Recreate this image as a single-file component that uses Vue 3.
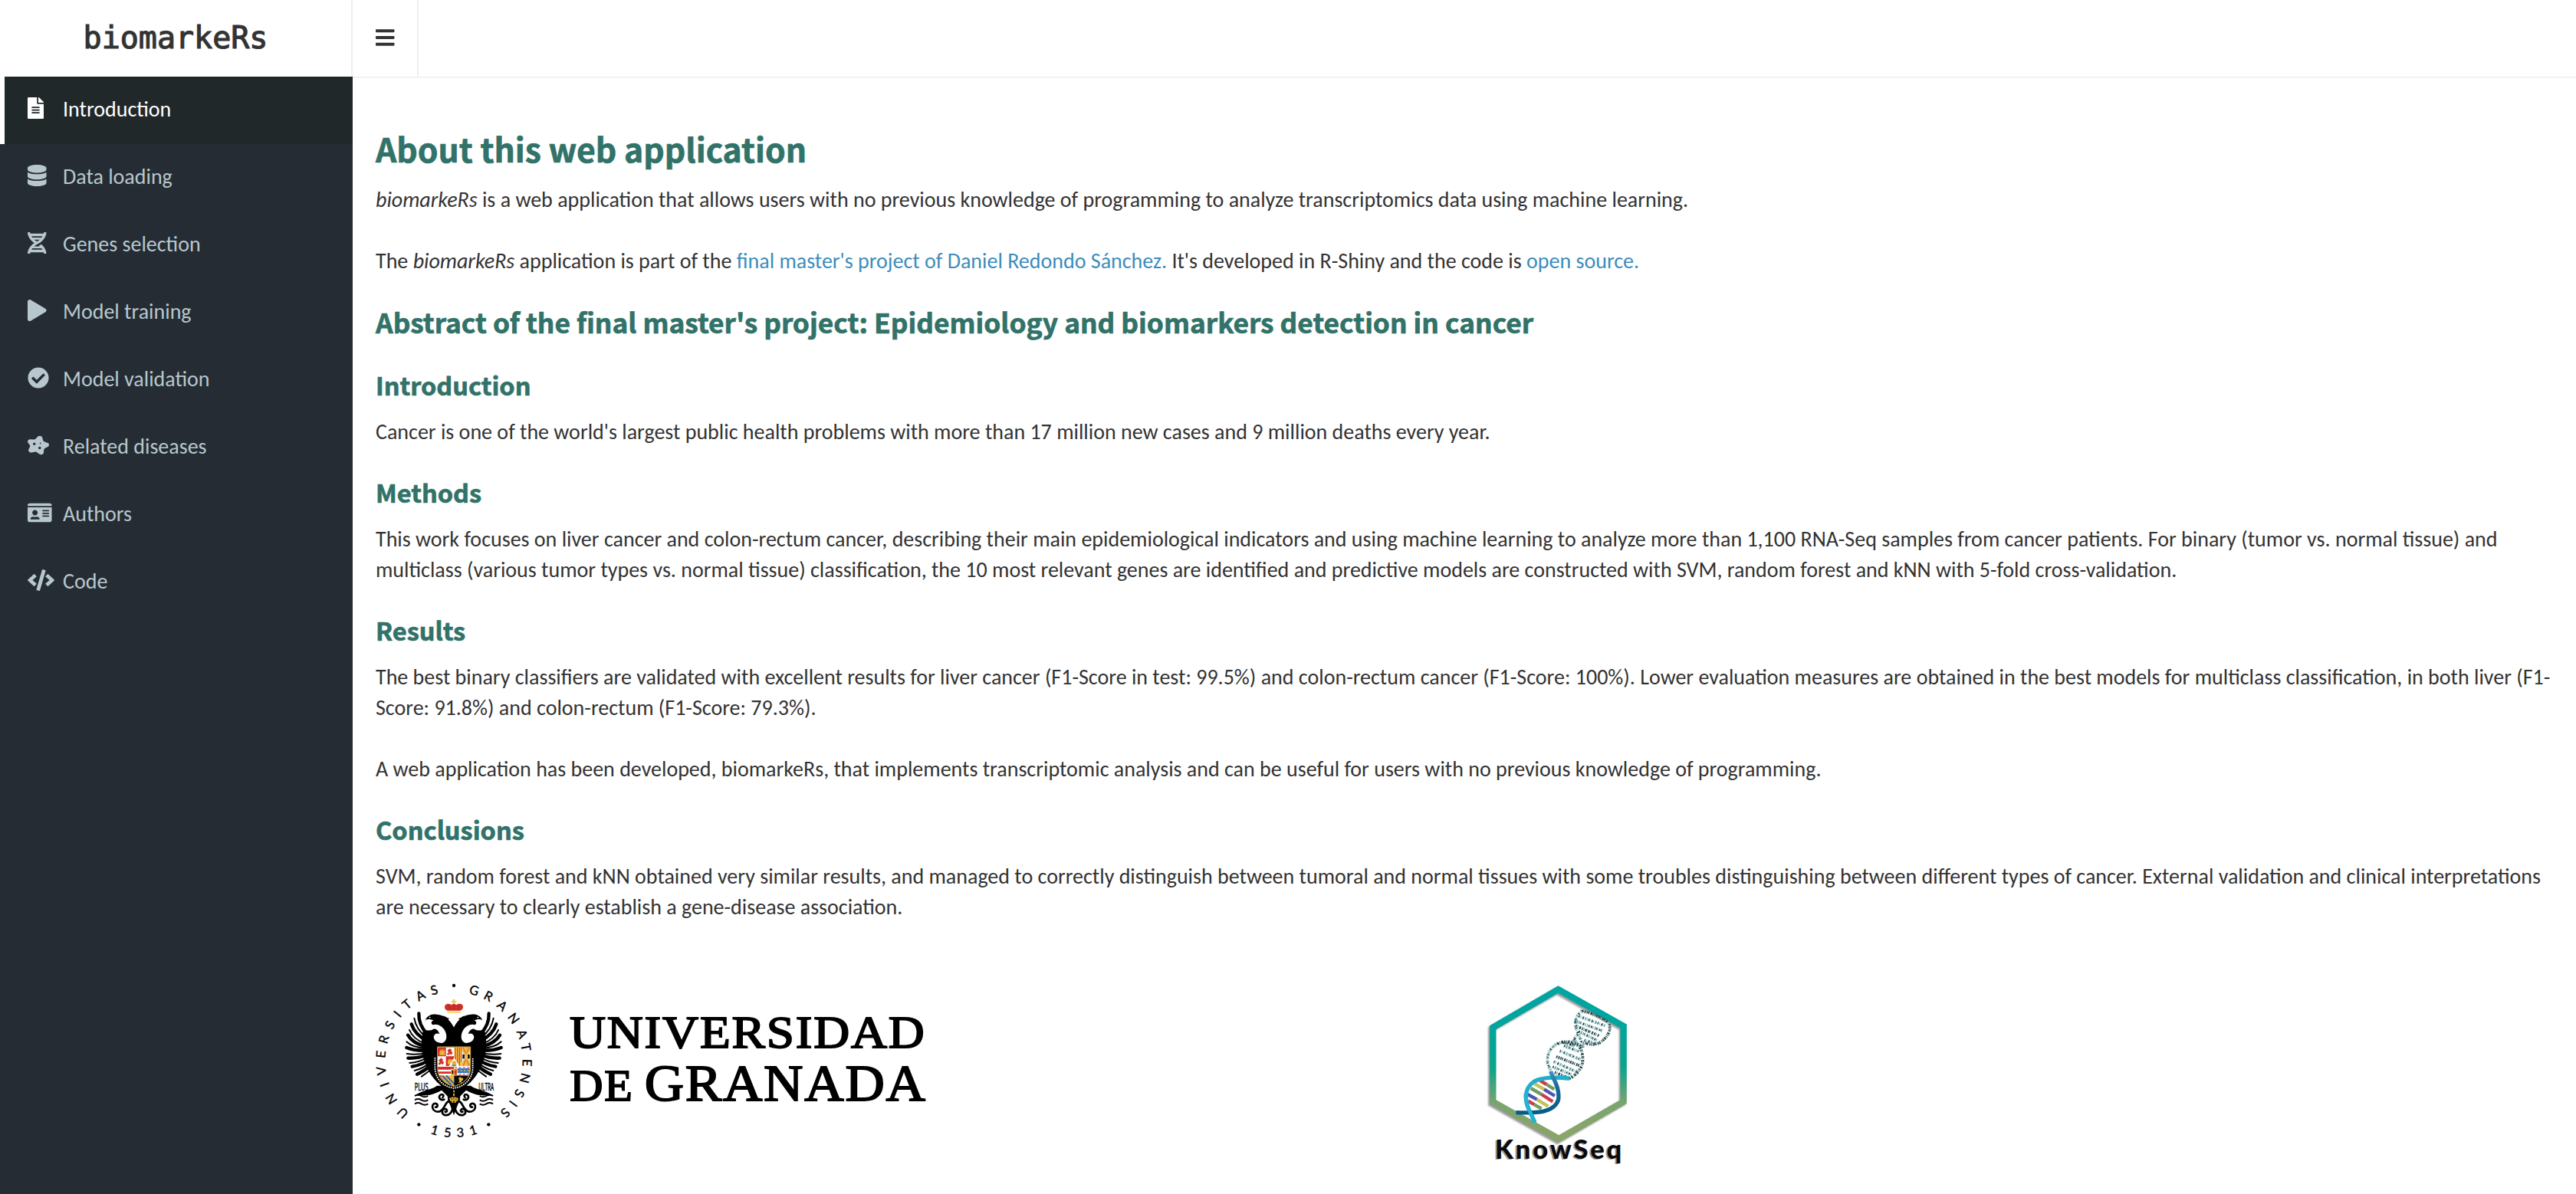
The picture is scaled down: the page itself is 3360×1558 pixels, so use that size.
<script setup>
const menu = [
  { label: 'Introduction', w: 384, active: true, d: 'M224 136V0H24C10.7 0 0 10.7 0 24v464c0 13.3 10.7 24 24 24h336c13.3 0 24-10.7 24-24V160H248c-13.2 0-24-10.8-24-24zm64 236c0 6.6-5.4 12-12 12H108c-6.6 0-12-5.4-12-12v-8c0-6.6 5.4-12 12-12h168c6.6 0 12 5.4 12 12v8zm0-64c0 6.6-5.4 12-12 12H108c-6.6 0-12-5.4-12-12v-8c0-6.6 5.4-12 12-12h168c6.6 0 12 5.4 12 12v8zm0-72v8c0 6.6-5.4 12-12 12H108c-6.6 0-12-5.4-12-12v-8c0-6.6 5.4-12 12-12h168c6.6 0 12 5.4 12 12zm96-114.1v6.1H256V0h6.1c6.4 0 12.5 2.5 17 7l97.9 98c4.5 4.5 7 10.6 7 16.9z' },
  { label: 'Data loading', w: 448, d: 'M448 73.143v45.714C448 159.143 347.667 192 224 192S0 159.143 0 118.857V73.143C0 32.857 100.333 0 224 0s224 32.857 224 73.143zM448 176v102.857C448 319.143 347.667 352 224 352S0 319.143 0 278.857V176c48.125 33.143 136.208 48.572 224 48.572S399.874 209.143 448 176zm0 160v102.857C448 479.143 347.667 512 224 512S0 479.143 0 438.857V336c48.125 33.143 136.208 48.572 224 48.572S399.874 369.143 448 336z' },
  { label: 'Genes selection', w: 448, d: 'M.1 494.1c-1.1 9.5 6.3 17.8 15.9 17.8l32.3.1c8.1 0 14.9-5.9 16-13.9.7-4.9 1.8-11.1 3.4-18.1H380c1.6 6.9 2.9 13.2 3.5 18.1 1.1 8 7.9 14 16 13.9l32.3-.1c9.6 0 17.1-8.3 15.9-17.8-4.6-37.9-25.6-129-118.9-207.7-17.6 12.4-37.1 24.2-58.5 35.4 6.2 4.6 11.4 9.4 17 14.2H159.7c21.3-18.1 47-35.6 78.7-51.4C410.5 199.1 442.1 65.8 447.9 17.9 449 8.4 441.6.1 432 .1L399.6 0c-8.1 0-14.9 5.9-16 13.9-.7 4.9-1.8 11.1-3.4 18.1H67.8c-1.6-7-2.7-13.1-3.4-18.1-1.1-8-7.9-14-16-13.9L16.1.1C6.5.1-1 8.4.1 17.9 5.3 60.8 31.4 171.8 160 256 31.5 340.2 5.3 451.2.1 494.1zM224 219.6c-25.1-13.7-46.4-28.4-64.3-43.6h128.5c-17.8 15.2-39.1 30-64.2 43.6zM355.1 96c-5.8 10.4-12.8 21.1-21 32H114c-8.3-10.9-15.3-21.6-21-32h262.1zM92.9 416c5.8-10.4 12.8-21.1 21-32h219.4c8.3 10.9 15.4 21.6 21.2 32H92.9z' },
  { label: 'Model training', w: 448, d: 'M424.4 214.7L72.4 6.6C43.8-10.3 0 6.1 0 47.9V464c0 37.5 40.7 60.1 72.4 41.3l352-208c31.4-18.5 31.5-64.1 0-82.6z' },
  { label: 'Model validation', w: 512, d: 'M504 256c0 136.967-111.033 248-248 248S8 392.967 8 256 119.033 8 256 8s248 111.033 248 248zM227.314 387.314l184-184c6.248-6.248 6.248-16.379 0-22.627l-22.627-22.627c-6.248-6.249-16.379-6.249-22.628 0L216 308.118l-70.059-70.059c-6.248-6.248-16.379-6.248-22.628 0l-22.627 22.627c-6.248 6.248-6.248 16.379 0 22.627l104 104c6.249 6.249 16.379 6.249 22.628.001z' },
  { label: 'Related diseases', w: 512, d: 'M472.29 195.9l-67.06-22.95c-19.28-6.6-33.54-20.92-38.14-38.31l-16-60.45c-11.58-43.77-76.57-57.13-110-22.62L195 99.24c-13.26 13.71-33.54 20.93-54.2 19.31l-71.9-5.62c-52-4.07-86.93 44.89-59 82.84l38.54 52.42c11.08 15.07 12.82 33.86 4.64 50.24l-28.43 57C4 396.67 47.46 440.29 98.11 429.23l70-15.28c20.11-4.39 41.45 0 57.07 11.73l54.32 40.83c39.32 29.56 101 7.57 104.45-37.22l4.7-61.86c1.35-17.79 12.8-33.86 30.63-43l62-31.74c44.84-22.96 39.55-80.17-8.99-96.79zM160 256a32 32 0 1 1 32-32 32 32 0 0 1-32 32zm128 96a32 32 0 1 1 32-32 32 32 0 0 1-32 32zm16-128a16 16 0 1 1 16-16 16 16 0 0 1-16 16z' },
  { label: 'Authors', w: 576, d: 'M528 32H48C21.5 32 0 53.5 0 80v16h576V80c0-26.5-21.5-48-48-48zM0 432c0 26.5 21.5 48 48 48h480c26.5 0 48-21.5 48-48V128H0v304zm352-232c0-4.4 3.6-8 8-8h144c4.4 0 8 3.6 8 8v16c0 4.4-3.6 8-8 8H360c-4.4 0-8-3.6-8-8v-16zm0 64c0-4.4 3.6-8 8-8h144c4.4 0 8 3.6 8 8v16c0 4.4-3.6 8-8 8H360c-4.4 0-8-3.6-8-8v-16zm0 64c0-4.4 3.6-8 8-8h144c4.4 0 8 3.6 8 8v16c0 4.4-3.6 8-8 8H360c-4.4 0-8-3.6-8-8v-16zM176 192c35.3 0 64 28.7 64 64s-28.7 64-64 64-64-28.7-64-64 28.7-64 64-64zM67.1 396.2C75.5 370.5 99.6 352 128 352h8.2c12.3 5.1 25.7 8 39.8 8s27.6-2.9 39.8-8h8.2c28.4 0 52.5 18.5 60.9 44.2 3.2 9.9-5.2 19.8-15.6 19.8H82.7c-10.4 0-18.8-10-15.6-19.8z' },
  { label: 'Code', w: 640, d: 'M278.9 511.5l-61-17.7c-6.4-1.8-10-8.5-8.2-14.9L346.2 8.7c1.8-6.4 8.5-10 14.9-8.2l61 17.7c6.4 1.8 10 8.5 8.2 14.9L293.8 503.3c-1.9 6.4-8.5 10.1-14.9 8.2zm-114-112.2l43.5-46.4c4.6-4.9 4.3-12.7-.8-17.2L117 256l90.6-79.7c5.1-4.5 5.5-12.3.8-17.2l-43.5-46.4c-4.5-4.8-12.1-5.1-17-.5L3.8 247.2c-5.1 4.7-5.1 12.8 0 17.5l144.1 135.1c4.9 4.6 12.5 4.4 17-.5zm327.2.6l144.1-135.1c5.1-4.7 5.1-12.8 0-17.5L492.1 112.1c-4.8-4.5-12.4-4.3-17 .5L431.6 159c-4.6 4.9-4.3 12.7.8 17.2L523 256l-90.6 79.7c-5.1 4.5-5.5 12.3-.8 17.2l43.5 46.4c4.5 4.9 12.1 5.1 17 .6z' },
]

// Seal lettering: character and its angle, in degrees clockwise from the top
const ring = [
  ['U', -135.6], ['N', -121.5], ['I', -109.1], ['V', -98], ['E', -85], ['R', -73.2], ['S', -60.9], ['I', -50.4], ['T', -39.8], ['A', -27.2], ['S', -15.6],
  ['G', 16.1], ['R', 28.2], ['A', 41.3], ['N', 54.8], ['A', 68.6], ['T', 79.4], ['E', 91.6], ['N', 103.9], ['S', 116.6], ['I', 125.9], ['S', 135.3],
]
const year = [['1', 15.4], ['5', 5], ['3', -5], ['1', -15.4]]

// Left wing, mirrored for the right one
const thick = [
  'M229 187 Q227 232 262 268', 'M200 229 Q212 268 262 296', 'M186 272 Q204 304 258 318',
  'M181 321 Q212 334 262 332', 'M187 362 Q222 364 268 348', 'M203 395 Q238 390 276 366', 'M222 425 Q252 412 284 384',
]
const thin = [
  'M211 206 Q218 250 258 280', 'M192 252 Q206 288 258 308', 'M181 298 Q206 322 258 324',
  'M182 345 Q218 350 262 342', 'M193 381 Q230 378 270 358', 'M212 411 Q246 402 280 376', 'M240 434 Q266 418 290 392',
]
const rungs = [
  [326, 420, 352, 435, '#cf3b4d'], [352, 435, 382, 454, '#6f9c63'],
  [304, 432, 342, 454, '#c4c25a'], [342, 454, 384, 480, '#4a55b8'],
  [290, 450, 332, 474, '#6f9c63'], [332, 474, 376, 502, '#cf3b4d'],
  [278, 474, 314, 494, '#4a55b8'], [314, 494, 358, 521, '#c4c25a'],
  [280, 500, 304, 514, '#cf3b4d'], [304, 514, 332, 530, '#6f9c63'],
]
const digits = [
  'M492 148 Q545 158 590 190', 'M478 168 L582 206', 'M462 186 L572 226', 'M466 206 L556 244', 'M478 228 L548 262',
  'M492 146 Q448 180 474 232 Q486 262 496 290', 'M598 200 Q606 240 560 272 Q530 286 495 270', 'M500 262 L548 276',
  'M460 258 Q466 274 496 290', 'M396 276 Q440 256 480 286 Q500 320 490 362 Q470 400 440 412', 'M396 274 Q350 300 356 352 L368 382',
  'M404 304 L486 338', 'M390 326 L482 362', 'M380 346 L470 386', 'M376 366 L452 398', 'M384 388 L438 410', 'M420 284 L478 306',
  'M474 240 Q452 262 456 286', 'M410 268 L462 284',
]
</script>

<template>
  <div class="app">
    <header class="topbar">
      <div class="brand">biomarkeRs</div>
      <button class="toggle" aria-label="Toggle navigation">
        <svg viewBox="0 0 448 512" width="24.5" height="28"><path d="M16 132h416c8.800 0 16-7.200 16-16V76c0-8.800-7.200-16-16-16H16C7.200 60 0 67.200 0 76v40c0 8.800 7.200 16 16 16zm0 160h416c8.800 0 16-7.200 16-16v-40c0-8.800-7.200-16-16-16H16c-8.800 0-16 7.200-16 16v40c0 8.800 7.200 16 16 16zm0 160h416c8.800 0 16-7.200 16-16v-40c0-8.800-7.200-16-16-16H16c-8.800 0-16 7.200-16 16v40c0 8.800 7.200 16 16 16z" /></svg>
      </button>
    </header>

    <div class="body">
      <nav class="sidebar">
        <a v-for="m in menu" :key="m.label" class="item" :class="{ active: m.active }">
          <span class="icon"><svg :viewBox="`0 0 ${m.w} 512`" :width="m.w * 28 / 512" height="28"><path :d="m.d" /></svg></span>
          <span class="label">{{ m.label }}</span>
        </a>
      </nav>

      <main class="content">
        <h1>About this web application</h1>
        <p><i>biomarkeRs</i> is a web application that allows users with no previous knowledge of programming to analyze transcriptomics data using machine learning.</p>
        <p>The <i>biomarkeRs</i> application is part of the <a>final master's project of Daniel Redondo Sánchez.</a> It's developed in R-Shiny and the code is <a>open source.</a></p>

        <h2>Abstract of the final master's project: Epidemiology and biomarkers detection in cancer</h2>

        <h3>Introduction</h3>
        <p>Cancer is one of the world's largest public health problems with more than 17 million new cases and 9 million deaths every year.</p>

        <h3>Methods</h3>
        <p>This work focuses on liver cancer and colon-rectum cancer, describing their main epidemiological indicators and using machine learning to analyze more than 1,100 RNA-Seq samples from cancer patients. For binary (tumor vs. normal tissue) and multiclass (various tumor types vs. normal tissue) classification, the 10 most relevant genes are identified and predictive models are constructed with SVM, random forest and kNN with 5-fold cross-validation.</p>

        <h3>Results</h3>
        <p>The best binary classifiers are validated with excellent results for liver cancer (F1-Score in test: 99.5%) and colon-rectum cancer (F1-Score: 100%). Lower evaluation measures are obtained in the best models for multiclass classification, in both liver (F1-Score: 91.8%) and colon-rectum (F1-Score: 79.3%).</p>
        <p>A web application has been developed, biomarkeRs, that implements transcriptomic analysis and can be useful for users with no previous knowledge of programming.</p>

        <h3>Conclusions</h3>
        <p>SVM, random forest and kNN obtained very similar results, and managed to correctly distinguish between tumoral and normal tissues with some troubles distinguishing between different types of cancer. External validation and clinical interpretations are necessary to clearly establish a gene-disease association.</p>

        <div class="logos">
          <svg class="ugr" viewBox="60 0 2190 720" width="730" height="240">
            <defs>
              <clipPath id="shield"><path d="M303 319H430V400C430 440 405 462 366 472C328 462 303 440 303 400Z" /></clipPath>
              <g id="wing">
                <path d="M368 246C352 212 330 192 298 191C280 190 262 194 254 215C264 207 276 211 286 214C276 220 276 228 284 232C300 226 318 236 328 250C342 272 340 298 320 303C302 304 288 294 287 280C288 268 300 262 310 268C306 256 298 246 286 248C276 256 262 254 246 252C236 290 238 340 250 372C264 410 276 430 300 456L318 472L368 492Z" />
                <path d="M325 196Q338 204 350 208L334 212Z" />
                <path v-for="d in thick" :key="d" :d="d" class="quill" />
                <path v-for="d in thin" :key="d" :d="d" class="quill fine" />
                <path d="M300 470C286 484 240 488 213 508C250 508 275 512 318 488L350 520V470Z" />
                <g class="wave">
                  <path d="M213 510q13-8 26 0t26 0" /><path d="M213 526q13-8 26 0t26 0" /><path d="M213 541q13-8 26 0t26 0" />
                </g>
                <g class="curl">
                  <path d="M328 524C308 530 302 508 318 504C326 504 328 512 322 516" />
                  <path d="M352 530C330 528 332 568 306 572C276 572 276 536 296 540C306 544 302 556 294 554" />
                  <path d="M360 540C366 574 346 590 328 584C314 576 322 556 336 562C342 568 338 574 332 572" />
                </g>
                <path d="M336 476C344 506 338 530 350 542L366 586V470Z" />
              </g>
            </defs>
            <g class="ring">
              <text v-for="(c, i) in ring" :key="i" x="366" y="103" :transform="`rotate(${c[1]} 366 372)`">{{ c[0] }}</text>
              <text v-for="(c, i) in year" :key="'y' + i" x="366" y="672" :transform="`rotate(${c[1]} 366 372)`">{{ c[0] }}</text>
              <circle cx="366" cy="78" r="6.500" /><circle cx="229" cy="622" r="6.500" /><circle cx="502" cy="622" r="6.500" />
            </g>
            <use href="#wing" />
            <use href="#wing" transform="matrix(-1 0 0 1 732 0)" />
            <circle cx="272" cy="203" r="2.500" fill="#fff" /><circle cx="460" cy="203" r="2.500" fill="#fff" />
            <!-- crown -->
            <path d="M362 132h8v6h6v6h-6v8h-8v-8h-6v-6h6z" fill="#f5cb5c" />
            <path d="M341 176C326 172 326 150 343 149C350 149 354 152 356 154Q366 146 376 154C380 149 386 149 390 149C406 150 406 172 391 176Z" fill="#d02f2a" />
            <path d="M348 154v20M366 150v24M384 154v20" stroke="#a31d1d" stroke-width="2" />
            <rect x="340" y="178" width="52" height="8" fill="#f8d878" />
            <!-- collar -->
            <path d="M292 364V400C294 446 326 476 366 481C406 476 438 446 440 400V364" fill="none" stroke="#000" stroke-width="14" />
            <path d="M292 362V400C294 446 326 474 366 480C406 474 438 446 440 400V362" fill="none" stroke="#fff" stroke-width="6" stroke-linecap="round" stroke-dasharray="0.100 8.500" />
            <!-- shield -->
            <g clip-path="url(#shield)">
              <rect x="301" y="317" width="131" height="156" fill="#fff" />
              <path d="M303 319h32v36h-32zM335 355h32v38h-32z" fill="#d4302a" />
              <path d="M310 350v-16h4v-6h4v6h3v-8h4v8h3v-4h3v20zM342 386v-16h4v-6h4v6h3v-5h4v5h3v-4h3v20z" fill="#e9b73a" />
              <path d="M342 332l8-6 6 4-2 8 6 2-4 8-6-4-6 6-4-4 6-6zM308 370l8-7 6 4-2 8 6 3-4 8-6-4-6 6-4-4 6-6z" fill="#d4302a" stroke="#d4302a" stroke-width="3" />
              <rect x="367" y="319" width="30" height="74" fill="#f1c447" />
              <path d="M372 319v74M380 319v74M388 319v74M395 319v60" stroke="#d4502e" stroke-width="4" />
              <rect x="397" y="319" width="34" height="74" fill="#f1b63f" />
              <path d="M397 330L412 356L397 384ZM431 330L416 356L431 384Z" fill="#e8e4dc" />
              <path d="M400 348h8v16h-8zM420 348h8v16h-8z" fill="#111" />
              <path d="M402 319l10 24M426 319l-10 24M402 393l10-24M426 393l-10-24" stroke="#d4602e" stroke-width="3" />
              <path d="M344 397L367 360L390 397Z" fill="#fff" />
              <circle cx="367" cy="381" r="8" fill="#f1a63f" /><path d="M356 388h22l-5 6h-12z" fill="#4c9b50" />
              <rect x="303" y="396" width="64" height="36" fill="#d4302a" />
              <path d="M303 411h64M303 427h64" stroke="#fff" stroke-width="8" />
              <rect x="303" y="432" width="64" height="42" fill="#f1b63f" />
              <path d="M322 432L362 474M336 430L374 470M308 434L346 474" stroke="#2e5fa6" stroke-width="6" />
              <path d="M303 430h18l-18 20z" fill="#d4302a" />
              <rect x="367" y="396" width="64" height="32" fill="#f4f0ea" />
              <path d="M380 402h48v18h-48z" fill="#3f76bd" /><path d="M378 411h52" stroke="#f1c447" stroke-width="5" stroke-dasharray="5 9" />
              <path d="M370 399h60M370 425h60" stroke="#d4302a" stroke-width="3" stroke-dasharray="8 8" />
              <rect x="367" y="430" width="64" height="44" fill="#0b0b0b" />
              <path d="M384 440l8-4 6 6 4-4v10l-8 4 4 8-8-4-6 4 4-10z" fill="#eab83c" />
              <rect x="354" y="404" width="13" height="28" fill="#f1c447" /><rect x="367" y="404" width="11" height="28" fill="#e0702f" />
              <path d="M358 410h6v14h-6z" fill="#111" /><path d="M370 412h5v12h-5z" fill="#c3262a" />
            </g>
            <path d="M302 318H431V400C431 440 405 463 366 473C328 463 302 440 302 400Z" fill="none" stroke="#d8b23c" stroke-width="3" />
            <!-- fleece pendant -->
            <path d="M363 488h6v8h-6zM363 500h6v10h-6z" fill="#d9a92e" />
            <path d="M348 519q18-10 36 0l-4 12h-6v6h-6v-8h-4v8h-6v-6h-6z" fill="#d9a92e" />
            <path d="M358 518v8M366 514v10M375 518v8" stroke="#000" stroke-width="2" />
            <g class="motto">
              <text x="212" y="490" textLength="54" lengthAdjust="spacingAndGlyphs">PLUS</text>
              <text x="463" y="490" textLength="59" lengthAdjust="spacingAndGlyphs">ULTRA</text>
            </g>
            <g class="wordmark">
              <text x="819" y="322" font-size="178" textLength="1394" lengthAdjust="spacingAndGlyphs">UNIVERSIDAD</text>
              <text x="820" y="529" font-size="174" textLength="250" lengthAdjust="spacingAndGlyphs">DE</text>
              <text x="1112" y="529" font-size="205" textLength="1104" lengthAdjust="spacingAndGlyphs">GRANADA</text>
            </g>
          </svg>

          <svg class="knowseq" viewBox="0 0 780 810" width="260" height="270">
            <defs>
              <linearGradient id="hex" gradientUnits="userSpaceOnUse" x1="0" y1="48" x2="0" y2="662">
                <stop offset="0" stop-color="#00a5a3" /><stop offset=".3" stop-color="#00a59c" /><stop offset=".52" stop-color="#08a58c" />
                <stop offset=".75" stop-color="#7aa56f" /><stop offset="1" stop-color="#8da568" />
              </linearGradient>
              <linearGradient id="strand" x1="0" y1="0" x2="0" y2="1">
                <stop offset="0" stop-color="#3f93c4" /><stop offset=".35" stop-color="#176c9c" /><stop offset="1" stop-color="#075c84" />
              </linearGradient>
              <filter id="soft"><feGaussianBlur stdDeviation="3" /></filter>
            </defs>
            <path d="M392 70L648 214V507L394 655L136 510V218Z" class="hexline" stroke="#999" filter="url(#soft)" />
            <path d="M397 63L653 207V503L400 648L142 503V212Z" class="hexline" stroke="url(#hex)" />
            <g fill="none" stroke-width="12">
              <path v-for="(d, i) in digits" :key="d" :d="d" :stroke="i % 3 ? '#6fa5a5' : '#3d5b60'" :stroke-dasharray="i % 2 ? '5 3 2 5 7 4' : '3 5 6 3 4 4'" />
              <path v-for="(d, i) in digits" :key="'k' + d" :d="d" stroke="#10383c" stroke-width="6" :stroke-dasharray="i % 2 ? '3 13 4 19' : '5 17 3 9'" />
            </g>
            <line v-for="r in rungs" :key="r.join()" :x1="r[0]" :y1="r[1]" :x2="r[2]" :y2="r[3]" :stroke="r[4]" stroke-width="13" />
            <path d="M442 412C388 406 335 405 302 424C262 452 266 500 284 536L306 584" fill="none" stroke="#1fafcc" stroke-width="16" />
            <path d="M368 384C376 412 404 446 398 494C384 544 320 548 232 545" fill="none" stroke="url(#strand)" stroke-width="16" />
            <path d="M270 470C270 500 278 520 284 536L306 584" fill="none" stroke="#22b4d2" stroke-width="15" />
            <text class="ks shadow" x="144" y="730" textLength="496">KnowSeq</text>
            <text class="ks" x="150" y="725" textLength="496">KnowSeq</text>
          </svg>
        </div>
      </main>
    </div>
  </div>
</template>

<style>
body { margin: 0; background: #fff; }
</style>

<style scoped>
.app { width: 100%; height: 1558px; overflow: hidden; display: flex; flex-direction: column; font-family: Calibri, Carlito, Lato, sans-serif; font-size: 28px; line-height: 40px; color: #333; }
.topbar { height: 100px; flex: none; display: flex; box-shadow: 0 1px 2px rgba(0, 0, 0, .1); }
.brand { box-sizing: border-box; width: 460px; border-right: 2px solid #eee; text-align: center; font: 40px/98px "DejaVu Sans Mono", monospace; color: #333; -webkit-text-stroke: 1.2px #333; }
.toggle { box-sizing: border-box; width: 86px; border: 0; border-right: 2px solid #eee; background: none; padding: 0 0 0 30px; display: flex; align-items: center; }
.toggle svg { fill: #333; margin-top: -2px; }
.body { flex: 1; display: flex; min-height: 0; }
.sidebar { width: 460px; flex: none; background: #252c33; }
.item { box-sizing: border-box; height: 88px; display: flex; align-items: center; padding-left: 30px; border-left: 6px solid transparent; color: #b8c7ce; }
.item.active { background: #21282a; color: #fff; border-left-color: #fff; }
.icon { width: 46px; height: 34px; display: flex; }
.icon svg { fill: currentColor; flex: none; }
.label { padding-bottom: 2px; }
.content { flex: 1; min-width: 0; padding: 67px 30px 0; }
h1, h2, h3 { color: #317269; font-family: "Source Sans Pro", "Noto Sans CJK SC", sans-serif; font-weight: 700; -webkit-text-stroke: .7px #317269; }
h1 { font-size: 42.7px; line-height: 52px; margin: 0 0 22px; }
h2 { font-size: 35.3px; line-height: 44px; margin: -3px 0 42px; }
h3 { font-size: 32.5px; line-height: 40px; margin: -2px 0 22px; }
p { margin: 0 0 40px; }
p a { color: #3c8dbc; }
.logos { display: flex; margin-top: 56px; }
.ugr { flex: none; margin-right: 680px; overflow: visible; }
.knowseq { flex: none; margin-top: 10px; }
.ring text { font: 50px Lato, sans-serif; text-anchor: middle; fill: #000; stroke: #000; stroke-width: 1; }
.quill { fill: none; stroke: #000; stroke-width: 13; stroke-linecap: round; }
.fine { stroke-width: 6; }
.wave path { fill: none; stroke: #000; stroke-width: 6; }
.curl path { fill: none; stroke: #000; stroke-width: 8; stroke-linecap: round; }
.motto text { font: 44px "Open Sans", sans-serif; fill: #000; stroke: #000; stroke-width: 1.5; }
.wordmark text { font-family: "Liberation Serif", serif; fill: #000; stroke: #000; stroke-width: 5.5; letter-spacing: 5px; }
.hexline { fill: none; stroke-width: 25; }
.ks { font: 900 104px Lato, sans-serif; fill: #0a0a0a; }
.shadow { fill: #999; }
</style>
